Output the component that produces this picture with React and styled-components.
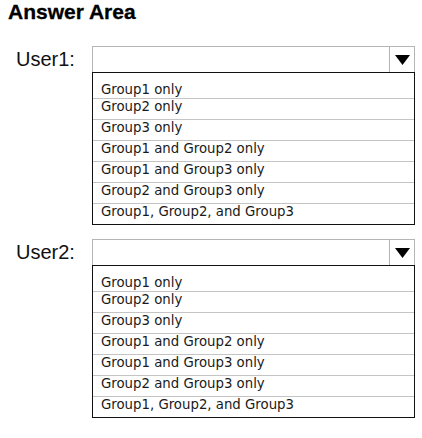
import React from "react";
import styled, { createGlobalStyle } from "styled-components";

const GlobalStyle = createGlobalStyle`
  html, body {
    margin: 0;
    padding: 0;
    background: #fff;
  }
  body {
    font-family: "Liberation Sans", Arial, sans-serif;
    color: #111;
  }
`;

const Page = styled.div`
  width: 422px;
  height: 438px;
  overflow: hidden;
`;

const Title = styled.h1`
  margin: 0;
  padding-left: 8px;
  font-family: "Liberation Sans", Arial, sans-serif;
  font-weight: 700;
  font-size: 21px;
  line-height: 23px;
  color: #000;
  -webkit-text-stroke: 0.3px #000;
`;

const Groups = styled.div`
  display: flex;
  flex-direction: column;
  gap: 14px;
  margin-top: 23px;
`;

const Group = styled.div`
  display: grid;
  grid-template-columns: 92px 323px;
  align-items: start;
`;

const Label = styled.div`
  padding-left: 16px;
  height: 26px;
  font-size: 20px;
  line-height: 26px;
  color: #111;
`;

const Field = styled.div`
  display: flex;
  flex-direction: column;
`;

const Select = styled.div`
  display: flex;
  height: 25px;
  border: 1px solid #b5b5b5;
  border-bottom: none;
  background: #fff;
`;

const SelectValue = styled.div`
  flex: 1;
`;

const ArrowCell = styled.div`
  width: 24px;
  display: flex;
  align-items: center;
  justify-content: center;
  border-left: 1px solid #b5b5b5;
`;

const List = styled.ul`
  list-style: none;
  margin: 0;
  padding: 0;
  border: 1px solid #111;
`;

const Option = styled.li`
  padding: 0 0 4px 8px;
  font-family: "DejaVu Sans", Verdana, sans-serif;
  font-size: 13.3px;
  line-height: 16px;
  color: #1a1a1a;
  border-top: 1px solid #c4c4c4;

  &:first-child {
    border-top: none;
    padding-top: 9px;
    padding-bottom: 0;
  }
`;

const options = [
  "Group1 only",
  "Group2 only",
  "Group3 only",
  "Group1 and Group2 only",
  "Group1 and Group3 only",
  "Group2 and Group3 only",
  "Group1, Group2, and Group3",
];

const Arrow = () => (
  <svg width="15" height="10" viewBox="0 0 15 10">
    <polygon points="0,0 15,0 7.5,10" fill="#000" />
  </svg>
);

const Dropdown = ({ label }) => (
  <Group>
    <Label>{label}</Label>
    <Field>
      <Select>
        <SelectValue />
        <ArrowCell>
          <Arrow />
        </ArrowCell>
      </Select>
      <List>
        {options.map((o) => (
          <Option key={o}>{o}</Option>
        ))}
      </List>
    </Field>
  </Group>
);

export default function App() {
  return (
    <Page>
      <GlobalStyle />
      <Title>Answer Area</Title>
      <Groups>
        <Dropdown label="User1:" />
        <Dropdown label="User2:" />
      </Groups>
    </Page>
  );
}
